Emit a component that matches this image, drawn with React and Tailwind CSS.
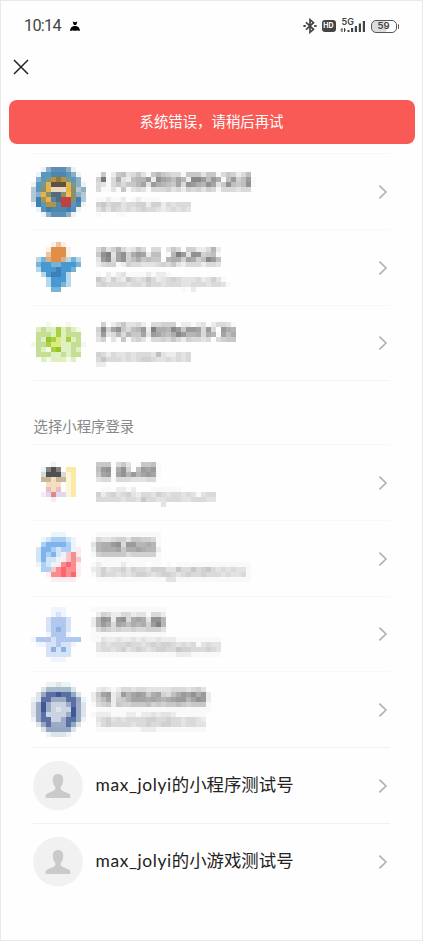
const CELL = 5

// one letter per avatar colour
const COLORS = {
  w: '#edf2f5', l: '#b4c7d6', L: '#8eaec8', B: '#5b8fb8', b: '#5599c0', s: '#4c87ad',
  t: '#7b9788', g: '#8c9068', o: '#b69343', O: '#967735', y: '#e3b34c', Y: '#f0bd55',
  D: '#5e5340', P: '#e8d8c4', n: '#59697d', r: '#c0423f', R: '#a9564a', d: '#3b80b3',
  a: '#e18f48', A: '#edc3a2', e: '#fbf0e6', c: '#469ad1', C: '#b5d9ea', k: '#3d7fba',
  j: '#78b3d6', i: '#d9b183', f: '#c5dd95', F: '#dff0c0', h: '#a5d23f', H: '#95c52c',
  v: '#f3f9ea', V: '#dcea80', x: '#838383', X: '#505050', z: '#d8d8d8', Z: '#c8b899',
  p: '#f8dcc0', q: '#e8bfc3', Q: '#dd868c', u: '#f9e9f0', U: '#e0d8ec', m: '#fbe9a6',
  M: '#fcf5da', 1: '#7eb3ed', 2: '#acd0f3', 3: '#d0e5f8', 4: '#eaf4fb', 5: '#f98c91',
  6: '#fb656d', 7: '#f9c4ca', 8: '#fdedef', 9: '#b0c8ed', 0: '#8eb0e8',
  G: '#d6e2f5', J: '#f0f4fc', K: '#3f5895', N: '#5a70a4', S: '#9daac6', T: '#cbd3e0',
  W: '#dce3ea', E: '#a6bccd', I: '#94a9c1',
}

const accounts = [
  {
    height: 'h-[76px]',
    pad: 'pt-[13px]',
    avatar: [
      '..wLBBBLw..',
      '.wbbsssbLw.',
      '.LbtoOotbL.',
      'wbtyDDDytLw',
      'lbgyPPPyglL',
      'lLygnngYgLl',
      'ldoysnrrgdl',
      'wdboosrrbsw',
      '.wBdsssdBw.',
      '..wLBBBLw..',
      '',
    ],
    text: [
      '',
      '016026734631686544166636614652470',
      '05f14932788b2ca97a82ddb7b917b57b1',
      '0431464668a3b9876a4cb98ca36c767c1',
      '04113161343144453425453541444344',
      '',
      '01121120121111',
      '05645534455255243444',
      '03535434345443234343',
      '010001100',
      '',
    ],
  },
  {
    height: 'h-[76px]',
    pad: 'pt-[12px]',
    avatar: [
      '....eAe....',
      '...eaaae...',
      '...Aaaae...',
      '.CjiaaiCjC.',
      '.jccjjcccj.',
      '.Cccckccj..',
      '..CckkcC...',
      '...CcccC...',
      '...CccjC...',
      '....jj.....',
      '',
    ],
    text: [
      '',
      '04735842364044036405522482',
      '06ce3ac59ba277018eb3cc5671',
      '03bd4ac579676608995a957db7',
      '02455125443334546324442443',
      '',
      '01021231111212210',
      '064253264346423454333423531',
      '0454444344354434443344434431',
      '000000000000000000102',
      '',
    ],
  },
  {
    height: 'h-[75px]',
    pad: 'pt-[11px]',
    avatar: [
      '',
      '...v...v...',
      '.FfFFhFfFv.',
      '.fffFhFfff.',
      '.fFHhVFhFf.',
      'vffhVVFFffv',
      '.fFvhHFFfF.',
      '.fffFFfFff.',
      '..FvFFFvF..',
      '',
      '',
    ],
    text: [
      '',
      '00502463342044555022123024431',
      '05d5ac6478b2e998db6bba4b40b98',
      '04b3484866a3ba879db8894981a79',
      '03503161453144546425443404566',
      '',
      '',
      '05424334344437322434',
      '04644434345543343434',
      '022',
      '',
    ],
  },
  {
    height: 'h-[76px]',
    pad: 'pt-[12px]',
    avatar: [
      '',
      '....w......',
      '..wxXx.mm..',
      '..zXXXzMm..',
      '..ZZpZZMm..',
      '...ppp.Mm..',
      '...qpq.Mm..',
      '..uUQUUMm..',
      '....u......',
      '',
      '',
    ],
    text: [
      '',
      '06660463016671',
      '07bc19c507bab1',
      '06ab1ac8b8aba1',
      '0344144433344',
      '',
      '001102212000111111',
      '0524534532443543443431344',
      '0444443443644334443344433',
      '000000000000003',
      '',
    ],
  },
  {
    height: 'h-[76px]',
    pad: 'pt-[11px]',
    avatar: [
      '....444....',
      '..4322234..',
      '..2111124..',
      '.311232248.',
      '.312134758.',
      '.313348757.',
      '.423485658.',
      '..22756558.',
      '...8556568.',
      '....88888..',
      '',
    ],
    text: [
      '01111111111111',
      '14334553665541',
      '3899bc4bb88981',
      '28999a699a9882',
      '15666664555551',
      '01111111111111',
      '12111121111011010111111111111111',
      '23534453544355533644645643434331',
      '13544343455434554345445444343341',
      '01111111111111133111111111111111',
      '',
    ],
  },
  {
    height: 'h-[75px]',
    pad: 'pt-[10px]',
    avatar: [
      '....JJJ....',
      '....JGJ....',
      '...G999G...',
      '...G999G...',
      '...G909G...',
      '...J999J...',
      'J999G99999.',
      '.JJGG9GGJ..',
      '...G0G0G...',
      '...GGGGG...',
      '....JJJ....',
    ],
    text: [
      '111111111111111',
      '025422442331442',
      '28cb2bc49a93cc8',
      '28b94a979895be8',
      '146545445445553',
      '111111111111111',
      '11322322323223222111111111',
      '03434445443454554343413433',
      '03443453454345544655444543',
      '01111111111111111222111111',
      '',
    ],
  },
  {
    height: 'h-[76px]',
    pad: 'pt-[10px]',
    avatar: [
      '...wwWww...',
      '..WEEEEEW..',
      '.WINNKNNIW.',
      'wWNNSSSNNIw',
      'WSKSTTTSNSW',
      'WSKSTWTTKSW',
      'WSNTTTTSKSW',
      'wSNNTTSNNSw',
      '.WINSSSNIW.',
      '..WIIIIIW..',
      '...wWWWw...',
    ],
    text: [
      '',
      '023212443443333344434530',
      '26ab24b8aba69a5479bac9b2',
      '257a2568aaa9a989abb8acb2',
      '145626556667565667656661',
      '011111111111111111111111',
      '12221112212232332111111',
      '03453434444554454434432',
      '02454444344544554434433',
      '01111111112221111111111',
      '',
    ],
  },
]

// hex digit to gray, 0 is the page background
const grayFor = (ch) => {
  const level = parseInt(ch, 16)
  const v = level < 2 ? 254 - level * 5 : 254 - level * 9
  return `rgb(${v},${v},${v})`
}

function Mosaic({ rows, cols, color, className }) {
  return (
    <svg
      width={cols * CELL}
      height={rows.length * CELL}
      shapeRendering="crispEdges"
      className={className}
    >
      {rows.map((row, y) =>
        [...row].map((ch, x) =>
          color(ch) ? (
            <rect key={`${x}-${y}`} x={x * CELL} y={y * CELL} width={CELL} height={CELL} fill={color(ch)} />
          ) : null
        )
      )}
    </svg>
  )
}

function Arrow() {
  return (
    <svg width="10" height="18" viewBox="0 0 10 18" fill="none" className="mr-0.5 ml-auto shrink-0 self-center">
      <path d="M1.4 2.6 8 9l-6.6 6.4" stroke="#b0b0b0" strokeWidth="1.6" />
    </svg>
  )
}

function HiddenRow({ item }) {
  return (
    <div className={`flex items-start border-t border-[#f7f7f7] ${item.height}`}>
      <div className={`flex ${item.pad}`}>
        <Mosaic rows={item.avatar} cols={11} color={(ch) => COLORS[ch]} className="-ml-0.5 shrink-0" />
        <Mosaic rows={item.text} cols={36} color={grayFor} className="ml-[5px] shrink-0" />
      </div>
      <Arrow />
    </div>
  )
}

function TestRow({ owner, name }) {
  return (
    <div className="flex h-[76px] items-center border-t border-[#f1f1f1]">
      <svg width="50" height="50" viewBox="0 0 50 50" className="shrink-0">
        <circle cx="25" cy="24.700" r="24.800" fill="#f1f1f1" />
        <path
          d="M25 13c-3.300 0-5.200 2.300-5.200 5.600 0 3.200 1 6 2.600 7.700.3 1.700-.4 2.900-2.200 3.700l-5.200 2.300c-1.800.8-2.400 1.600-2.400 3v1.700h24.800v-1.700c0-1.400-.6-2.200-2.400-3L29.800 30c-1.800-.8-2.500-2-2.200-3.700 1.600-1.700 2.600-4.500 2.600-7.700 0-3.300-1.900-5.600-5.200-5.600Z"
          fill="#cacaca"
        />
      </svg>
      <span className="mb-0.5 ml-[12.5px] whitespace-nowrap text-[17.4px] leading-6 text-[#222]">
        <span className="tracking-[0.6px]">{owner}</span>
        {name}
      </span>
      <Arrow />
    </div>
  )
}

function StatusBar() {
  return (
    <div className="flex h-[50px] items-center pl-[23px] pr-[23px] text-[#444]">
      <span className="font-['Roboto'] text-[16.3px] leading-5 tracking-[-0.75px]">10:14</span>
      <svg width="12" height="12" viewBox="0 0 12 12" className="ml-[8px] fill-black">
        <path d="M3.700 1.400 6 2.300l2.300-.9-.5 2.200C7.600 4.700 7 5.300 6 5.300s-1.600-.6-1.800-1.700Z" />
        <path d="M1 10.700C1.300 7.700 3 6.100 5 5.900h2c2 .2 3.700 1.800 4 4.800H8.500L8 9.500l-.3 1.200H4.300L4 9.500l-.5 1.200Z" />
      </svg>

      <div className="ml-auto flex items-center">
        <svg width="14" height="16" viewBox="0 0 14 16" fill="none" stroke="#444" strokeWidth="1.7">
          <path d="m3 4.300 7.500 7L7 14.300V1.700l3.500 3L3 11.700" />
          <path d="M.4 8h2.400M11.200 8h2.400" strokeWidth="2" />
        </svg>
        <span className="ml-[5px] flex h-3 w-[14px] items-center justify-center rounded-[3px] bg-[#444] font-['Inter'] text-[7px] font-bold text-white">
          HD
        </span>
        <div className="relative ml-1 h-4 w-[26px]">
          <span className="absolute -top-px left-0.5 font-['Inter'] text-[9px] leading-[9px] font-semibold">5G</span>
          <svg width="26" height="16" viewBox="0 0 26 16" className="absolute inset-0 fill-[#444]">
            <path d="M1.500 10h1v4h-1zM4 10h1v4H4zM.500 11.500h1v1h-1zM5 11.500h1v1H5zM7.500 12h2v2h-2zM11 10h2.200v4H11zM14.800 8H17v6h-2.200zM18.800 5.500H21V14h-2.200zM22.800 3H25v11h-2.200z" />
          </svg>
        </div>
        <div className="ml-[5px] flex h-[13px] w-[26px] items-center justify-center rounded-[5px] border-[1.5px] border-[#555] bg-linear-to-r from-[#dcdcdc] from-58% to-white to-58% font-['Inter'] text-[9.5px] leading-none font-semibold">
          59
        </div>
        <span className="ml-px h-[5px] w-[1.5px] rounded-r bg-[#555]" />
      </div>
    </div>
  )
}

function App() {
  return (
    <div className="h-[941px] w-[423px] overflow-hidden border border-[#e9e9e9] bg-[#fefefe] font-['Lato','Noto_Sans_CJK_SC',sans-serif]">
      <StatusBar />

      <div className="flex h-[49px] pt-2 pl-3">
        <svg width="16" height="16" viewBox="0 0 16 16" stroke="#222" strokeWidth="1.5">
          <path d="m1 1 14 14M15 1 1 15" />
        </svg>
      </div>

      <div className="mx-[7.5px] flex h-11 items-center justify-center rounded-lg bg-[#fa5a55] text-[14.4px] text-white">
        系统错误，请稍后再试
      </div>

      <div className="mr-8 ml-8 pt-[9px]">
        {accounts.slice(0, 3).map((item, i) => (
          <HiddenRow key={i} item={item} />
        ))}
        <div className="flex h-16 items-end border-t border-[#f4f4f4] pb-[7px] pl-[0.5px] text-[14.4px] leading-5 text-[#888]">
          选择小程序登录
        </div>
        {accounts.slice(3).map((item, i) => (
          <HiddenRow key={i} item={item} />
        ))}
        <TestRow owner="max_jolyi" name="的小程序测试号" />
        <TestRow owner="max_jolyi" name="的小游戏测试号" />
      </div>
    </div>
  )
}

export default App
